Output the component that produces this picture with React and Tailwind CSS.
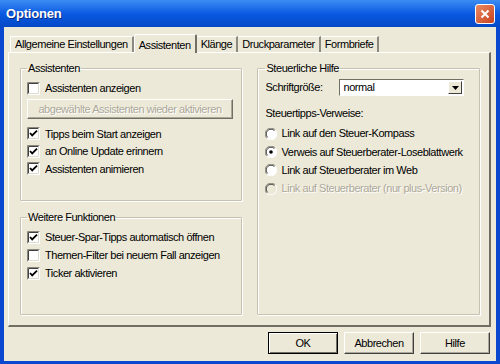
import React from "react";

function CheckBox({ checked }) {
  return (
    <svg width="13" height="13" viewBox="0 0 13 13" className="shrink-0">
      <rect x="0" y="0" width="13" height="13" fill="#fff" />
      <path d="M0.5 12.5V0.5H12.5" stroke="#8a877c" fill="none" />
      <path d="M1.5 11.5V1.5H11.5" stroke="#404040" fill="none" />
      <path d="M1.5 11.5H11.5V1.5" stroke="#dedbcf" fill="none" />
      {checked && <polyline points="3,6 5.2,8.4 10,3.6" stroke="#000" strokeWidth="1.8" fill="none" />}
    </svg>
  );
}

function Radio({ checked, disabled }) {
  return (
    <svg width="12" height="12" viewBox="0 0 12 12" className="shrink-0">
      <circle cx="6" cy="6" r="5.5" fill={disabled ? "#ece9d8" : "#fff"} />
      <path d="M10.2 1.8A5.9 5.9 0 0 0 1.8 10.2" stroke="#8a877c" fill="none" />
      <path d="M9.4 2.6A4.8 4.8 0 0 0 2.6 9.4" stroke="#404040" fill="none" />
      <path d="M1.8 10.2A5.9 5.9 0 0 0 10.2 1.8" stroke="#fff" fill="none" />
      {checked && <circle cx="6" cy="6" r="1.8" fill="#000" />}
    </svg>
  );
}

function CheckRow({ label, checked, h = "h-[17.5px]" }) {
  return (
    <div className={`flex items-center gap-[5px] ${h}`}>
      <CheckBox checked={checked} />
      <span>{label}</span>
    </div>
  );
}

function RadioRow({ label, checked, disabled }) {
  return (
    <div className="flex items-center gap-[4px] h-[18.3px]">
      <Radio checked={checked} disabled={disabled} />
      <span className={disabled ? "text-[#aca899] [text-shadow:1px_1px_0_#fff]" : ""}>{label}</span>
    </div>
  );
}

function Group({ title, className, children }) {
  return (
    <fieldset
      className={`m-0 border border-[#c5c2b2] rounded-[1px] px-[6px] pb-0 pt-0 shadow-[1px_1px_0_#fff,inset_1px_1px_0_#fff] ${className}`}
    >
      <legend className="px-[1px] ml-0 leading-[13px]">{title}</legend>
      {children}
    </fieldset>
  );
}

const TABS = ["Allgemeine Einstellungen", "Assistenten", "Klänge", "Druckparameter", "Formbriefe"];

function Button({ label, primary }) {
  return (
    <button
      className={
        primary
          ? "w-[70px] h-[22px] border border-black bg-[#ece9d8] shadow-[inset_1px_1px_0_#fff,inset_-1px_-1px_0_#716f64]"
          : "w-[70px] h-[22px] border border-t-white border-l-white border-r-[#404040] border-b-[#404040] bg-[#ece9d8] shadow-[inset_-1px_-1px_0_#aca899]"
      }
    >
      {label}
    </button>
  );
}

export default function App() {
  return (
    <div className="w-[500px] h-[364px] flex flex-col bg-[#0a48d0] font-['Liberation_Sans',Arial,sans-serif] text-[11px] tracking-[-0.45px] text-black">
      <div className="h-[27px] flex items-center justify-between pl-[6px] pr-[5px] bg-linear-to-b from-[#3c8cf3] via-[#0a5ae2] to-[#0548c6] shrink-0">
        <span className="text-white font-bold text-[13px] tracking-[-0.2px] [text-shadow:1px_1px_0_#0b2a85]">Optionen</span>
        <div className="w-[20px] h-[20px] rounded-[3px] border border-white bg-linear-to-br from-[#e98a62] to-[#c8401c] flex items-center justify-center">
          <svg width="10" height="10" viewBox="0 0 10 10">
            <path d="M1.5 1.5L8.5 8.5M8.5 1.5L1.5 8.5" stroke="#fff" strokeWidth="2" />
          </svg>
        </div>
      </div>

      <div className="flex-1 mx-[4px] mb-[3px] bg-[#ece9d8] flex flex-col pl-[4px] pr-[5px] pt-[7px]">
        <div className="flex items-end h-[18px] ml-[2px]">
          {TABS.map((t, i) =>
            i === 1 ? (
              <div
                key={t}
                className="h-[19px] mb-[-1px] relative z-10 px-[4px] flex items-start pt-[2px] bg-[#ece9d8] border-l border-t border-white border-r-2 border-r-[#716f64] rounded-t-[2px]"
              >
                {t}
              </div>
            ) : (
              <div
                key={t}
                className={`h-[16px] px-[4px] flex items-center border-t border-white border-r-2 border-r-[#8c8a80] ${i === 0 ? "border-l" : ""}`}
              >
                {t}
              </div>
            )
          )}
        </div>

        <div className="h-[275px] border-l border-t border-white border-r-2 border-b-2 border-r-[#716f64] border-b-[#716f64] pl-[11px] pr-[9px] pt-[9px] flex gap-[15px]">
          <div className="w-[223px] flex flex-col gap-[10px]">
            <Group title="Assistenten" className="h-[139px]">
              <div className="mt-[5px]">
                <CheckRow label="Assistenten anzeigen" h="h-[17px]" />
              </div>
              <div className="mt-[2px] h-[20px] w-[206px] flex items-center justify-center border border-t-white border-l-white border-r-[#716f64] border-b-[#716f64] shadow-[inset_-1px_-1px_0_#aca899] text-[#aca899] [text-shadow:1px_1px_0_#fff]">
                abgewählte Assistenten wieder aktivieren
              </div>
              <div className="mt-[6px]">
                <CheckRow label="Tipps beim Start anzeigen" checked />
                <CheckRow label="an Online Update erinnern" checked />
                <CheckRow label="Assistenten animieren" checked />
              </div>
            </Group>
            <Group title="Weitere Funktionen" className="h-[104px]">
              <div className="mt-[4px]">
                <CheckRow label="Steuer-Spar-Tipps automatisch öffnen" checked h="h-[18px]" />
                <CheckRow label="Themen-Filter bei neuem Fall anzeigen" h="h-[18px]" />
                <CheckRow label="Ticker aktivieren" checked h="h-[18px]" />
              </div>
            </Group>
          </div>

          <Group title="Steuerliche Hilfe" className="w-[223px] h-[253px] !px-[7px]">
            <div className="mt-[4px] flex items-center h-[17px]">
              <span className="w-[74px]">Schriftgröße:</span>
              <div className="w-[125px] h-[17px] bg-white border border-t-[#716f64] border-l-[#716f64] border-r-white border-b-white flex items-center justify-between pl-[3px] pr-[1px]">
                <span>normal</span>
                <div className="w-[14px] h-[13px] bg-[#ece9d8] border border-t-white border-l-white border-r-[#404040] border-b-[#404040] flex items-center justify-center">
                  <svg width="7" height="4" viewBox="0 0 7 4">
                    <path d="M0 0H7L3.5 4Z" fill="#000" />
                  </svg>
                </div>
              </div>
            </div>
            <div className="mt-[9px]">Steuertipps-Verweise:</div>
            <div className="mt-[3px]">
              <RadioRow label="Link auf den Steuer-Kompass" />
              <RadioRow label="Verweis auf Steuerberater-Loseblattwerk" checked />
              <RadioRow label="Link auf Steuerberater im Web" />
              <RadioRow label="Link auf Steuerberater (nur plus-Version)" disabled />
            </div>
          </Group>
        </div>

        <div className="flex justify-end gap-[6px] mt-[5px] pr-[1px]">
          <Button label="OK" primary />
          <Button label="Abbrechen" />
          <Button label="Hilfe" />
        </div>
      </div>
    </div>
  );
}
